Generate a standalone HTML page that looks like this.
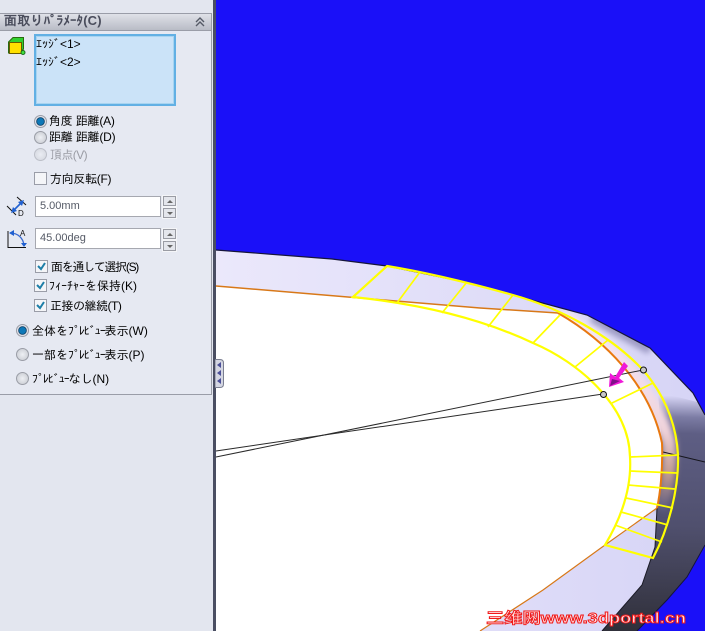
<!DOCTYPE html>
<html lang="ja"><head><meta charset="utf-8"><style>
html,body{margin:0;padding:0}
body{width:705px;height:631px;position:relative;overflow:hidden;background:#1a10f8;font-family:"Liberation Sans","IPAGothic","Noto Sans CJK JP",sans-serif;font-size:12px;color:#000}
div,span.a{position:absolute;box-sizing:border-box;white-space:nowrap}
#side{left:0;top:0;width:216px;height:631px;background:#e3e6ef;border-right:3px solid #4a4e62}
#box{left:0;top:13px;width:212px;height:382px;border:1px solid #9a9da8;border-left:none;background:#e6e9f2}
#hd{left:0;top:14px;width:211px;height:17px;background:linear-gradient(#dfe1e8,#b9bcc6);border-bottom:1px solid #9a9da8}
.t{line-height:14px;height:14px}
.k{letter-spacing:-1.1px}
.rb{width:13px;height:13px;border-radius:50%;border:1px solid #9a9da6;background:radial-gradient(#eef0f4,#c4c7ce)}
.rb.on{background:radial-gradient(#0d78b8 0 3px,#123a5c 4px,#e0e2ea 4.5px)}
.rb.off{opacity:.55}
.cb{width:13px;height:13px;border:1px solid #9a9da8;background:#f4f5f8}
.inp{width:126px;height:21px;left:35px;border:1px solid #a6a8b0;background:#fff;color:#555a66;padding:1px 4px;font-size:11px;line-height:17px}
.sp{width:13px;height:10px;left:163px;border:1px solid #9a9ca4;background:#e4e6ec;box-shadow:0 0 0 1px #f4f5f8}
.sp:after{content:"";position:absolute;left:3px;top:2px;border:3px solid transparent}
.up:after{border-bottom:3px solid #666;border-top:0;top:3px}
.dn:after{border-top:3px solid #666;border-bottom:0;top:3px}
</style></head><body>
<svg width="705" height="631" style="position:absolute;left:0;top:0" viewBox="0 0 705 631">
<defs>
<filter id="b" x="-30%" y="-30%" width="160%" height="160%"><feGaussianBlur stdDeviation="3"/></filter>
<linearGradient id="dk" gradientUnits="userSpaceOnUse" x1="684" y1="396" x2="678" y2="631"><stop offset="0" stop-color="#d8d6f6"/><stop offset=".09" stop-color="#7c7ca4"/><stop offset=".16" stop-color="#5e5e84"/><stop offset=".55" stop-color="#50506e"/><stop offset="1" stop-color="#30303a"/></linearGradient>
<linearGradient id="lav" gradientUnits="userSpaceOnUse" x1="216" y1="0" x2="705" y2="0"><stop offset="0" stop-color="#ebe8fb"/><stop offset="1" stop-color="#d6d4f6"/></linearGradient>
<linearGradient id="pk" gradientUnits="userSpaceOnUse" x1="0" y1="330" x2="0" y2="510"><stop offset="0" stop-color="#f6e6f4"/><stop offset=".55" stop-color="#f0d4dc"/><stop offset=".8" stop-color="#c09a90"/><stop offset="1" stop-color="#5a5a80"/></linearGradient>
<clipPath id="body"><path d="M216,250 L332,259 387,266 465,282 513,295 587,315 650,348 693,393 705,415 V545 L687,577 667,600 637,631 H216Z"/></clipPath>
</defs>
<path d="M216,250 L332,259 387,266 465,282 513,295 587,315 650,348 693,393 705,415 V545 L687,577 667,600 637,631 H216Z" fill="url(#lav)"/>
<g clip-path="url(#body)">
<path d="M658,392 L705,404 V545 L687,577 667,600 637,631 H602 L642,585 655,547 657,508 662,443 660,420Z" fill="url(#dk)"/>
<path d="M592,318 L650,350" fill="none" stroke="#9c9ac4" stroke-width="9" filter="url(#b)"/>
<path d="M560,316 C610,342 652,387 669,443 C671,470 666,495 660,510" fill="none" stroke="url(#pk)" stroke-width="14" filter="url(#b)"/>
</g>
<path d="M216,286 L480,308 558,313 C605,340 650,385 662,443 C663,470 660,495 657,508 L605,545 543,590 480,631 H216Z" fill="#fff"/>
<path d="M216,250 L332,259 387,266 465,282 513,295 587,315 650,348 693,393 705,415" fill="none" stroke="#15153a" stroke-width="1.2"/>
<path d="M705,545 L687,577 667,600 637,631" fill="none" stroke="#15153a" stroke-width="1"/>
<path d="M657,508 L655,547 642,585 602,631" fill="none" stroke="#1a1a26" stroke-width="1"/>
<path d="M663,452 L705,462" fill="none" stroke="#15151c" stroke-width="1"/>
<path d="M216,286 L480,308 558,313" fill="none" stroke="#d87818" stroke-width="1.500"/>
<path d="M558,313 C605,340 650,385 662,443 C663,470 660,495 657,508" fill="none" stroke="#e87810" stroke-width="2"/>
<path d="M657,508 L605,545 543,590 480,631" fill="none" stroke="#d87818" stroke-width="1.200"/>
<g fill="none" stroke="#ffff00" stroke-width="1.700">
<path d="M353,297 L387,266 C430,273 470,283 513,295 C560,308 610,335 643,370 C662,392 676,420 678,455 C679,490 668,530 653,558 L605,545 C620,520 632,490 630,457 C629,405 578,362 533,343 C480,318 420,304 353,297Z" stroke-width="2.200"/>
<path d="M397,303L420,272M442,313L467,282M488,327L513,295M533,343L560,315M575,367L608,340M612,403L653,383"/>
<path d="M630,457L678,455M630,471L677,473M628,485L675,489M626,498L673,508M621,512L668,525M615,525L662,542"/>
</g>
<g fill="none" stroke="#2a2a2a" stroke-width="1"><path d="M216,457 L643,370"/><path d="M216,451 L603,394"/></g>
<g fill="#c8c8c8" stroke="#111" stroke-width="1"><circle cx="643.500" cy="370" r="3"/><circle cx="603.500" cy="394.500" r="3"/></g>
<path d="M624,362 L628,366 619,378 624,382 609,387 610,373 615,377Z" fill="#f018d8"/>
<path d="M610,386 L612,379 620,381Z" fill="#80108a"/>
<text x="486" y="623" font-family="Liberation Sans,Noto Sans CJK SC,sans-serif" font-size="15" font-weight="bold" fill="#ffe4e4" stroke="#f01818" stroke-width=".9" textLength="200" lengthAdjust="spacingAndGlyphs">三维网www.3dportal.cn</text>
</svg>
<div id="side"></div>
<div id="box"></div>
<div id="hd"></div>
<div class="t" style="left:4px;top:14px;font-weight:bold;color:#4a4d5c;font-size:13px;letter-spacing:.15px">面取りﾊﾟﾗﾒｰﾀ(C)</div>
<svg width="12" height="12" style="position:absolute;left:194px;top:16px" viewBox="0 0 12 12"><path d="M2,6 L6,2 10,6M2,10 L6,6 10,10" fill="none" stroke="#555a66" stroke-width="1.400"/></svg>
<svg width="18" height="18" style="position:absolute;left:8px;top:37px" viewBox="0 0 18 18"><path d="M.5,5 L5,.5 H15.500 V12 L12,16 H.5Z" fill="#30d030" stroke="#2a6a10"/><path d="M1.500,5.500 H13.500 V16.500 H1.500Z" fill="#ffe000" stroke="#6a5a00"/><circle cx="15" cy="15.500" r="2" fill="#40e040" stroke="#1a6a1a"/></svg>
<div style="left:34px;top:34px;width:142px;height:72px;background:#cbe3f8;border:2px solid #62b0e4;box-shadow:inset 0 0 0 1px #a8d4f0"></div>
<div class="t" style="left:36px;top:37px">ｴｯｼﾞ&lt;1&gt;</div>
<div class="t" style="left:36px;top:55px">ｴｯｼﾞ&lt;2&gt;</div>
<div class="rb on" style="left:34px;top:115px"></div><div class="t" style="left:49px;top:114px;letter-spacing:-.2px">角度 距離(A)</div>
<div class="rb" style="left:34px;top:131px"></div><div class="t" style="left:49px;top:130px;letter-spacing:-.2px">距離 距離(D)</div>
<div class="rb off" style="left:34px;top:148px"></div><div class="t" style="left:50px;top:148px;color:#9a9ca4;letter-spacing:-.6px">頂点(V)</div>
<div class="cb" style="left:34px;top:172px"></div><div class="t" style="left:50px;top:172px;letter-spacing:-.3px">方向反転(F)</div>
<svg width="26" height="26" style="position:absolute;left:6px;top:195px" viewBox="0 0 26 26"><path d="M1,11 L10,20M11,2 L20,10" stroke="#111" stroke-width="1" fill="none"/><path d="M7,16 L16,7" stroke="#2060d0" stroke-width="1.600"/><path d="M5,18 L11,16 7,12ZM18,5 L12,7 16,11Z" fill="#2060d0"/><text x="12" y="21" font-size="8" font-family="Liberation Sans" fill="#111">D</text></svg>
<div class="inp" style="top:196px">5.00mm</div>
<div class="sp up" style="top:196px"></div><div class="sp dn" style="top:208px"></div>
<svg width="26" height="26" style="position:absolute;left:6px;top:228px" viewBox="0 0 26 26"><path d="M2,3 V19.500 H20" stroke="#111" fill="none"/><path d="M4,5 C12,5 17,10 18,17" stroke="#3a6ad0" stroke-width="1.300" fill="none"/><path d="M3,5 L8,2 8,8ZM18,19 L15,15 21,15Z" fill="#2060d0"/><text x="14" y="8" font-size="8" font-family="Liberation Sans" fill="#111">A</text></svg>
<div class="inp" style="top:228px">45.00deg</div>
<div class="sp up" style="top:229px"></div><div class="sp dn" style="top:241px"></div>
<svg width="14" height="62" style="position:absolute;left:35px;top:260px;overflow:visible" viewBox="0 0 14 62"><g fill="#f4f5f8" stroke="#9a9da8"><rect x=".5" y=".5" width="12" height="12"/><rect x="-.5" y="19.500" width="12" height="12"/><rect x="-.5" y="39.500" width="12" height="12"/></g><path d="M3,6 L6,9 10,3M2,25 L5,28 9,22M2,45 L5,48 9,42" fill="none" stroke="#1e7fa8" stroke-width="2"/></svg>
<div class="t" style="left:51px;top:260px;letter-spacing:-1.3px">面を通して選択(S)</div>
<div class="t" style="left:49px;top:279px">ﾌｨｰﾁｬｰを保持(K)</div>
<div class="t" style="left:50px;top:299px;letter-spacing:-.5px">正接の継続(T)</div>
<div class="rb on" style="left:16px;top:324px"></div><div class="t" style="left:32px;top:324px">全体を<span class="k">ﾌﾟﾚﾋﾞｭｰ</span>表示(W)</div>
<div class="rb" style="left:16px;top:348px"></div><div class="t" style="left:32px;top:348px">一部を<span class="k">ﾌﾟﾚﾋﾞｭｰ</span>表示(P)</div>
<div class="rb" style="left:16px;top:372px"></div><div class="t" style="left:32px;top:372px"><span class="k">ﾌﾟﾚﾋﾞｭｰ</span>なし(N)</div>
<svg width="10" height="30" style="position:absolute;left:215px;top:359px" viewBox="0 0 10 30"><path d="M0,.5 H5 Q8.500,.5 8.500,4 V25 Q8.500,28.500 5,28.500 H0Z" fill="#d4d6e2" stroke="#7a7e90"/><path d="M6,3 L2,6 6,9ZM6,11 L2,14 6,17ZM6,19 L2,22 6,25Z" fill="#4a4e98"/></svg>
</body></html>
